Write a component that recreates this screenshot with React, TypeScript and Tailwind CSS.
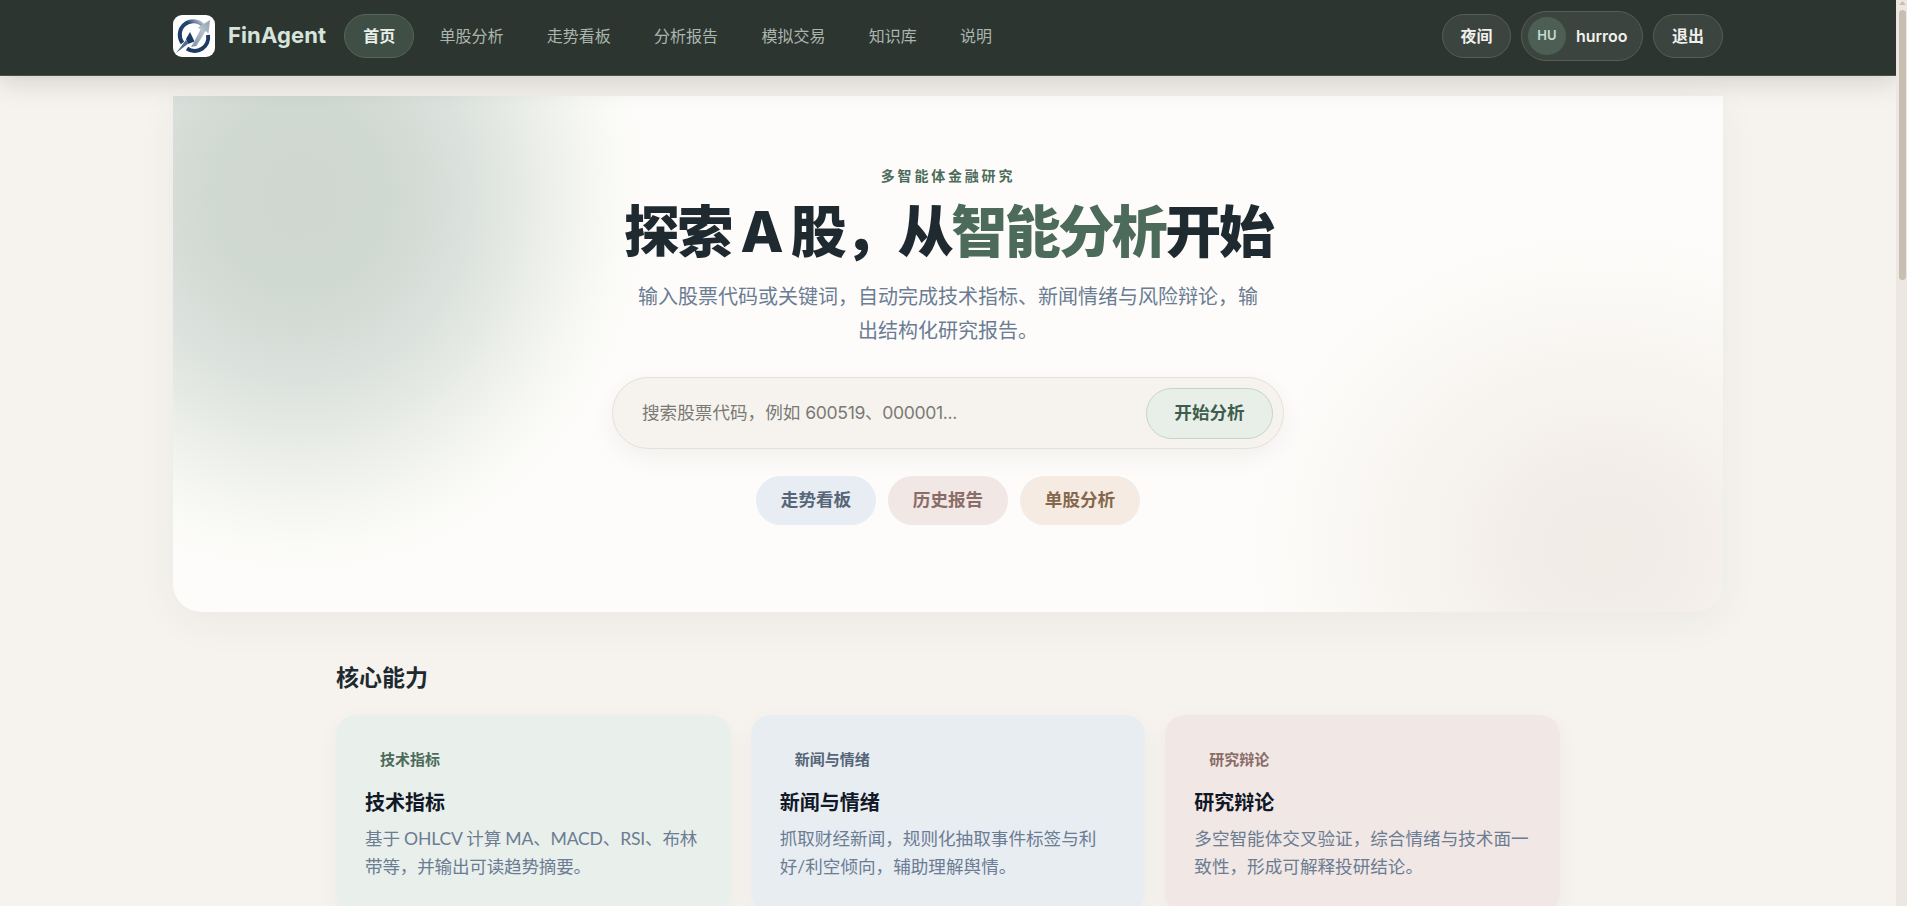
const font = "font-['Inter','Noto_Sans_CJK_SC',sans-serif]";

const navItems = ['单股分析', '走势看板', '分析报告', '模拟交易', '知识库', '说明'];

const quickLinks = [
  { label: '走势看板', cls: 'bg-[#e7edf2] text-[#566577]' },
  { label: '历史报告', cls: 'bg-[#f1e7e4] text-[#8a6c69]' },
  { label: '单股分析', cls: 'bg-[#f5ebe2] text-[#85674b]' },
];

const features = [
  {
    tag: '技术指标',
    title: '技术指标',
    desc: '基于 OHLCV 计算 MA、MACD、RSI、布林带等，并输出可读趋势摘要。',
    cls: 'bg-[#e9efeb]',
    tagCls: 'text-[#4d6b5a]',
    descCls: 'tracking-[-0.012em]',
  },
  {
    tag: '新闻与情绪',
    title: '新闻与情绪',
    desc: '抓取财经新闻，规则化抽取事件标签与利好/利空倾向，辅助理解舆情。',
    cls: 'bg-[#e8edf2]',
    tagCls: 'text-[#566577]',
    descCls: '',
  },
  {
    tag: '研究辩论',
    title: '研究辩论',
    desc: '多空智能体交叉验证，综合情绪与技术面一致性，形成可解释投研结论。',
    cls: 'bg-[#f1e7e4]',
    tagCls: 'text-[#8a6c69]',
    descCls: '',
  },
];

function Logo() {
  return (
    <svg viewBox="0 0 42 42" className="w-[42px] h-[42px] shrink-0">
      <defs>
        <linearGradient id="arrow" x1="0" y1="1" x2="1" y2="0">
          <stop offset="0" stopColor="#7c93a8" />
          <stop offset="0.6" stopColor="#b4c0ca" />
          <stop offset="1" stopColor="#8fa0af" />
        </linearGradient>
        <linearGradient id="ring" x1="0" y1="1" x2="1" y2="0">
          <stop offset="0" stopColor="#1d3a62" />
          <stop offset="0.65" stopColor="#24466f" />
          <stop offset="1" stopColor="#c5ced6" />
        </linearGradient>
      </defs>
      <rect width="42" height="42" rx="9" fill="#fff" />
      <path d="M9.5 28A13.5 13.5 0 0 1 30 10.5" fill="none" stroke="url(#ring)" strokeWidth="4" />
      <path d="M35 20A13.5 13.5 0 0 1 14 33.5" fill="none" stroke="#1d3a62" strokeWidth="4" />
      <path d="M13 24 17 17l4.5 9.5L15 29z" fill="#1d3a62" />
      <path d="M3 38 13 25l2.500 3.500-4 3z" fill="#4f6d8d" />
      <path d="M18 32 21.500 26 27.500 14.500 25 12.500 37 5l-1.500 13.500-3-2.500-9 15z" fill="url(#arrow)" />
    </svg>
  );
}

function FakeScrollbar() {
  return (
    <div className="w-[11px] shrink-0 h-full bg-[#ece8e1] pl-[3px] pr-[1px] flex flex-col items-stretch">
      <svg viewBox="0 0 7 10" className="w-[7px] h-[10px] shrink-0">
        <path d="M3.500 1 7 5H0z" fill="#c8bfb2" />
      </svg>
      <div className="h-[270px] rounded-full bg-[#c8bfb2]" />
    </div>
  );
}

export default function App() {
  return (
    <div className={`${font} h-screen overflow-hidden flex bg-[#f6f3ee]`}>
      <div className="flex-1 min-w-0 h-full overflow-hidden">
        <header className="relative z-20 h-[76px] bg-[#2d3530] border-b border-[#4a504b] shadow-[0_6px_24px_rgba(45,53,48,0.18)]">
          <div className="mx-auto w-[1550px] h-full flex items-center justify-between pb-[4px]">
            <div className="flex items-center">
              <Logo />
              <span className="ml-[13px] text-[22px] font-bold tracking-[0.005em] text-[#d6e4db]">FinAgent</span>
              <nav className="ml-[18px] flex items-center gap-[7.3px]">
                <a className="h-11 px-[18px] flex items-center rounded-full bg-[#3f4f46] border border-[#55655b] text-base font-semibold text-[#e8f0ea]">
                  首页
                </a>
                {navItems.map((item) => (
                  <a key={item} className="h-11 px-[18px] flex items-center rounded-full text-base text-[#aab5ae]">
                    {item}
                  </a>
                ))}
              </nav>
            </div>
            <div className="flex items-center gap-[10px]">
              <button className="h-11 w-[69px] rounded-full bg-[#3c4440] border border-[#565d59] text-base font-bold text-[#f0f1ec]">
                夜间
              </button>
              <div className="h-[50px] w-[122px] flex items-center gap-[10px] pl-[6px] rounded-full bg-[#3c4440] border border-[#565d59]">
                <span className="w-[38px] h-[38px] rounded-full bg-[#4d5f55] flex items-center justify-center text-[13px] font-semibold text-[#c5dace]">
                  HU
                </span>
                <span className="text-base font-semibold text-[#f0f1ec]">hurroo</span>
              </div>
              <button className="h-11 w-[70px] rounded-full bg-[#3c4440] border border-[#565d59] text-base font-bold text-[#f0f1ec]">
                退出
              </button>
            </div>
          </div>
        </header>

        <main className="pt-5">
          <section className="mx-auto w-[1550px] h-[516px] rounded-b-[28px] bg-[#fdfcfa] bg-[radial-gradient(ellipse_345px_375px_at_127px_99px,#cfd7d0_0%,#d0d8d2_25%,#dce2dd_50%,#ebeee9_70%,#f6f7f3_85%,rgba(253,252,250,0)_100%),radial-gradient(ellipse_350px_310px_at_1430px_449px,#f1ebe6_0%,#f3eee9_28%,#f8f5f1_60%,rgba(253,252,250,0)_100%)] shadow-[0_10px_40px_rgba(45,53,48,0.05)] flex flex-col items-center pt-[70px]">
            <p className="text-sm font-bold tracking-[0.2em] leading-5 text-[#4d6b5a]">多智能体金融研究</p>
            <h1 className="mt-[10px] text-[56px] leading-[72px] font-extrabold tracking-[-0.045em] text-[#1f2a30]">
              探索 A 股，从<span className="text-[#4d6b5a]">智能分析</span>开始
            </h1>
            <p className="mt-[12px] w-[630px] text-center text-xl leading-[34px] text-[#6b7c93]">
              输入股票代码或关键词，自动完成技术指标、新闻情绪与风险辩论，输出结构化研究报告。
            </p>
            <div className="mt-[29px] w-[672px] h-[72px] flex items-center justify-between pl-[29px] pr-[10px] rounded-full bg-[#f6f3ee] border border-[#e6e0d6] shadow-[0_8px_24px_rgba(45,53,48,0.06)]">
              <span className="text-[17.6px] text-[#7a7a75]">
                搜索股票代码，例如 <span className="tracking-[-0.02em]">600519、000001...</span>
              </span>
              <button className="h-[51px] w-[127px] rounded-full bg-[#e8efe9] border border-[#c5d4ca] text-[17.6px] font-bold text-[#3f5d4d]">
                开始分析
              </button>
            </div>
            <div className="mt-[27px] flex gap-3">
              {quickLinks.map((link) => (
                <a key={link.label} className={`h-[49px] w-[120px] flex items-center justify-center rounded-full text-[17.6px] font-bold ${link.cls}`}>
                  {link.label}
                </a>
              ))}
            </div>
          </section>

          <section className="mx-auto w-[1224px] mt-[50px]">
            <h2 className="text-[23px] leading-8 font-bold text-[#1f2a30]">核心能力</h2>
            <div className="mt-[21px] grid grid-cols-3 gap-5">
              {features.map((f) => (
                <article key={f.title} className={`h-[198px] rounded-[20px] px-[29px] pt-[30px] shadow-[0_8px_24px_rgba(45,53,48,0.04)] ${f.cls}`}>
                  <span className={`inline-block px-[15px] text-[15px] leading-[30px] font-semibold ${f.tagCls}`}>{f.tag}</span>
                  <h3 className="mt-[12px] text-xl leading-8 font-bold text-[#111827]">{f.title}</h3>
                  <p className={`mt-[6px] font-['Lato','Noto_Sans_CJK_SC',sans-serif] text-[17.6px] leading-7 text-[#6b7c93] ${f.descCls}`}>{f.desc}</p>
                </article>
              ))}
            </div>
          </section>
        </main>
      </div>
      <FakeScrollbar />
    </div>
  );
}
